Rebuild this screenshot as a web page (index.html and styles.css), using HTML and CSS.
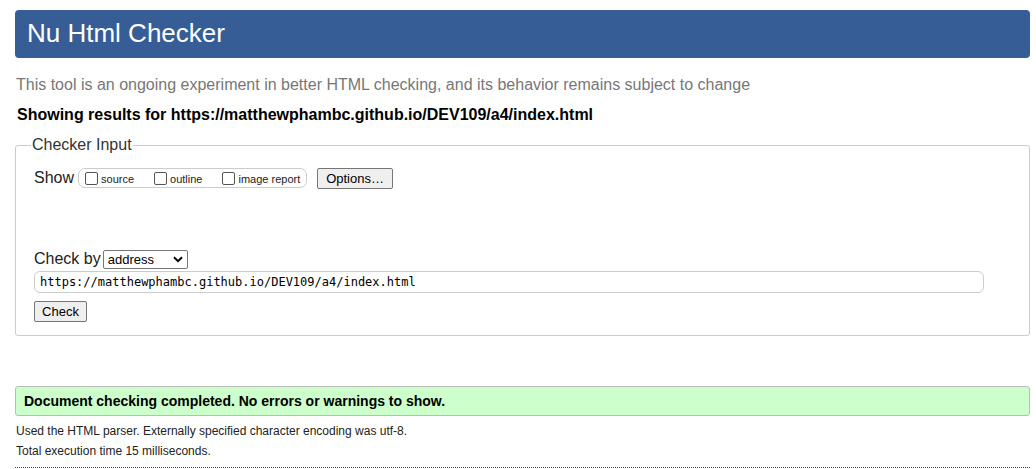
FILE: index.html
```html
<!DOCTYPE html>
<html>
<head>
<meta charset="utf-8">
<title>Nu Html Checker</title>
<link rel="stylesheet" href="styles.css">
</head>
<body>
<div class="page">
  <h1 class="banner">Nu Html Checker</h1>
  <p class="intro">This tool is an ongoing experiment in better HTML checking, and its behavior remains subject to change</p>
  <p class="showing">Showing results for https://matthewphambc.github.io/DEV109/a4/index.html</p>
  <fieldset class="checker">
    <legend class="legend">Checker Input</legend>
    <div class="show-row">
      <span class="label">Show</span>
      <span class="opts">
        <label class="opt"><input type="checkbox" class="cb">source</label>
        <label class="opt"><input type="checkbox" class="cb">outline</label>
        <label class="opt"><input type="checkbox" class="cb">image report</label>
      </span>
      <button class="btn options">Options…</button>
    </div>
    <div class="by-row">
      <span class="label">Check by</span>
      <span class="select"><span class="select-text">address</span><svg class="chev" width="10" height="7" viewBox="0 0 10 7"><path d="M1 1.2 L5 5.2 L9 1.2" fill="none" stroke="#000" stroke-width="2"/></svg></span>
    </div>
    <div class="url">https://matthewphambc.github.io/DEV109/a4/index.html</div>
    <button class="btn check">Check</button>
  </fieldset>
  <div class="success">Document checking completed. No errors or warnings to show.</div>
  <p class="meta first">Used the HTML parser. Externally specified character encoding was utf-8.</p>
  <p class="meta">Total execution time 15 milliseconds.</p>
  <div class="rule"></div>
</div>
</body>
</html>
```
FILE: styles.css
```css
* { box-sizing: border-box; }
html, body { margin: 0; padding: 0; background: #fff; }
body { font-family: "Liberation Sans", Arial, sans-serif; color: #000; }
.page { padding: 10px 6px 0 15px; }
.banner {
  margin: 0;
  height: 48px;
  line-height: 46px;
  padding-left: 12px;
  background: #365d95;
  color: #fff;
  font-size: 26px;
  font-weight: normal;
  border-radius: 4px;
}
.intro {
  margin: 17px 0 0 1px;
  font-size: 16px;
  line-height: 20px;
  color: #777;
}
.showing {
  margin: 10px 0 0 2px;
  font-size: 16px;
  font-weight: bold;
  line-height: 20px;
}
.checker {
  margin: 11px 0 0 0;
  padding: 12px 16px 13px 18px;
  border: 1px solid #ccc;
  border-radius: 3px;
  min-width: 0;
}
.legend {
  font-size: 16px;
  padding: 0 1px;
  margin-left: -3px;
  color: #333;
}
.label { font-size: 16px; color: #222; white-space: nowrap; }
.show-row {
  display: flex;
  align-items: center;
  height: 24px;
}
.opts {
  display: flex;
  align-items: center;
  flex-shrink: 0;
  margin-left: 4px;
  height: 20px;
  border: 1px solid #ccc;
  border-radius: 7px;
  padding: 0 6px 0 6px;
  width: 229px;
  white-space: nowrap;
}
.opt {
  display: flex;
  align-items: center;
  flex-shrink: 0;
  font-size: 11px;
  color: #222;
  margin-right: 20px;
  padding-top: 1px;
  white-space: nowrap;
}
.opt:last-child { margin-right: 0; }
.cb {
  appearance: none;
  flex-shrink: 0;
  width: 13px;
  height: 13px;
  margin: -1px 3px 0 0;
  border: 1px solid #555;
  border-radius: 2px;
  background: #fff;
}
.btn {
  font-family: "Liberation Sans", Arial, sans-serif;
  font-size: 13px;
  background: #efefef;
  border: 1px solid #767676;
  border-radius: 2px;
  color: #000;
  padding: 0;
  height: 21px;
}
.options { margin-left: 10px; width: 76px; flex-shrink: 0; }
.by-row {
  display: flex;
  align-items: center;
  margin-top: 59px;
  height: 20px;
}
.select {
  display: flex;
  align-items: center;
  justify-content: space-between;
  margin-left: 2px;
  width: 85px;
  height: 19px;
  border: 1px solid #767676;
  border-radius: 2px;
  padding: 0 4px 0 4px;
  font-size: 13px;
}
.chev { display: block; }
.url {
  margin-top: 2px;
  width: 950px;
  height: 22px;
  border: 1px solid #ccc;
  border-radius: 6px;
  padding-left: 5px;
  font-family: "DejaVu Sans Mono", monospace;
  font-size: 12px;
  line-height: 20px;
}
.check { margin-top: 8px; width: 53px; height: 21px; }
.success {
  margin-top: 50px;
  height: 30px;
  line-height: 28px;
  padding-left: 8px;
  background: #ccffcc;
  border: 1px solid #bbb;
  border-radius: 3px;
  font-size: 14px;
  font-weight: bold;
}
.meta {
  margin: 0 0 0 1px;
  font-size: 12px;
  line-height: 20px;
  color: #222;
}
.meta.first { margin-top: 5px; }
.rule { margin-top: 6px; border-top: 1px dotted #444; }
```
